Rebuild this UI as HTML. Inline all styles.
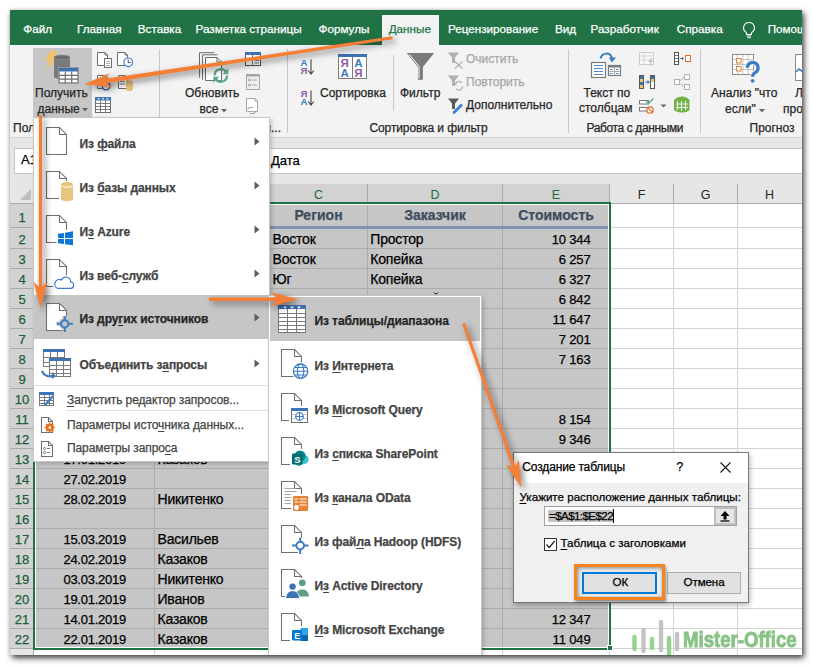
<!DOCTYPE html>
<html><head><meta charset="utf-8">
<style>
*{margin:0;padding:0;box-sizing:border-box}
html,body{width:813px;height:666px;overflow:hidden;background:#fff}
body{position:relative;font-family:"Liberation Sans",sans-serif;font-size:12px;color:#262626}
.a{position:absolute;white-space:nowrap;-webkit-text-stroke:0.25px currentColor}
#win{position:absolute;left:10px;top:10px;width:792px;height:645px;overflow:hidden;background:#fff}
#shadow{position:absolute;left:10px;top:10px;width:792px;height:645px;background:#fff;
 box-shadow:2px 3px 6px rgba(0,0,0,.75),0 0 4px rgba(0,0,0,.12)}
#pg{position:absolute;left:-10px;top:-10px;width:813px;height:666px}
u{text-decoration:underline;text-decoration-thickness:1px;text-underline-offset:1.5px}
</style></head><body>
<div id="shadow"></div>
<div id="win"><div id="pg">

<div class="a" style="left:10px;top:10px;width:792px;height:35px;background:#217346;"></div>
<div class="a" style="left:382px;top:15px;width:57px;height:30px;background:#f3f3f3;"></div>
<div class="a" style="left:23.3px;top:22.31px;font-size:11.7px;line-height:13.07px;color:#fff;letter-spacing:0px">Файл</div>
<div class="a" style="left:77.1px;top:22.31px;font-size:11.7px;line-height:13.07px;color:#fff;letter-spacing:0px">Главная</div>
<div class="a" style="left:137.8px;top:22.31px;font-size:11.7px;line-height:13.07px;color:#fff;letter-spacing:0px">Вставка</div>
<div class="a" style="left:195.5px;top:22.31px;font-size:11.7px;line-height:13.07px;color:#fff;letter-spacing:0px">Разметка страницы</div>
<div class="a" style="left:318.5px;top:22.31px;font-size:11.7px;line-height:13.07px;color:#fff;letter-spacing:0px">Формулы</div>
<div class="a" style="left:388.7px;top:22.31px;font-size:11.7px;line-height:13.07px;color:#217346;letter-spacing:0px">Данные</div>
<div class="a" style="left:447.90000000000003px;top:22.31px;font-size:11.7px;line-height:13.07px;color:#fff;letter-spacing:0px">Рецензирование</div>
<div class="a" style="left:554.9px;top:22.31px;font-size:11.7px;line-height:13.07px;color:#fff;letter-spacing:0px">Вид</div>
<div class="a" style="left:590.5999999999999px;top:22.31px;font-size:11.7px;line-height:13.07px;color:#fff;letter-spacing:0px">Разработчик</div>
<div class="a" style="left:676.8px;top:22.31px;font-size:11.7px;line-height:13.07px;color:#fff;letter-spacing:0px">Справка</div>
<div class="a" style="left:767.6999999999999px;top:22.31px;font-size:11.7px;line-height:13.07px;color:#fff;letter-spacing:0px">Помощник</div>
<svg class="a" style="left:741px;top:21px;" width="16" height="18" viewBox="0 0 16 18"><path d="M8 1.5a5.3 5.3 0 0 0-3.2 9.6c.6.5.9 1.2.9 1.9v.5h4.6V13c0-.7.3-1.4.9-1.9A5.3 5.3 0 0 0 8 1.5z" fill="none" stroke="#fff" stroke-width="1.1"/><path d="M5.8 15h4.4M6.3 16.8h3.4" stroke="#fff" stroke-width="1.1"/></svg>
<div class="a" style="left:10px;top:45px;width:792px;height:92px;background:#f3f3f3;"></div>
<div class="a" style="left:10px;top:137px;width:792px;height:1px;background:#d4d4d4;"></div>
<div class="a" style="left:10px;top:138px;width:792px;height:46px;background:#e6e6e6;"></div>
<div class="a" style="left:14px;top:148px;width:788px;height:26px;background:#fff;border:1px solid #c6c6c6;border-right:none"></div>
<div class="a" style="left:21px;top:153.24px;font-size:13px;line-height:14.52px;color:#000">A1</div>
<div class="a" style="left:271px;top:153.74px;font-size:13px;line-height:14.52px;color:#000">Дата</div>
<div class="a" style="left:33px;top:48px;width:59px;height:70px;background:#c6c6c6;"></div>
<div class="a" style="left:35px;top:87.04px;font-size:12px;line-height:13.40px;color:#262626">Получить</div>
<div class="a" style="left:37.5px;top:102.54px;font-size:12px;line-height:13.40px;color:#262626">данные</div>
<svg class="a" style="left:82px;top:108px;" width="6" height="4" viewBox="0 0 6 4"><path d="M0 0h6L3 3.5z" fill="#666"/></svg>
<div class="a" style="left:159px;top:49px;width:1px;height:84px;background:#c8c8c8;"></div>
<div class="a" style="left:287px;top:49px;width:1px;height:84px;background:#c8c8c8;"></div>
<div class="a" style="left:393px;top:55px;width:1px;height:56px;background:#c8c8c8;"></div>
<div class="a" style="left:568px;top:49px;width:1px;height:84px;background:#c8c8c8;"></div>
<div class="a" style="left:700px;top:49px;width:1px;height:84px;background:#c8c8c8;"></div>
<div class="a" style="left:185px;top:86.74px;font-size:12px;line-height:13.40px;color:#262626">Обновить</div>
<div class="a" style="left:199.5px;top:103.04px;font-size:12px;line-height:13.40px;color:#262626">все</div>
<svg class="a" style="left:221px;top:109px;" width="6" height="4" viewBox="0 0 6 4"><path d="M0 0h6L3 3.5z" fill="#666"/></svg>
<div class="a" style="left:320px;top:86.84px;font-size:12px;line-height:13.40px;color:#262626">Сортировка</div>
<div class="a" style="left:400px;top:86.89px;font-size:12px;line-height:13.40px;color:#262626">Фильтр</div>
<div class="a" style="left:466px;top:53.04px;font-size:12px;line-height:13.40px;color:#a6a6a6">Очистить</div>
<div class="a" style="left:466px;top:76.34px;font-size:12px;line-height:13.40px;color:#a6a6a6">Повторить</div>
<div class="a" style="left:466px;top:99.04px;font-size:12px;line-height:13.40px;color:#262626">Дополнительно</div>
<div class="a" style="left:583.5px;top:86.54px;font-size:12px;line-height:13.40px;color:#262626">Текст по</div>
<div class="a" style="left:579px;top:102.04px;font-size:12px;line-height:13.40px;color:#262626">столбцам</div>
<div class="a" style="left:711px;top:86.84px;font-size:12px;line-height:13.40px;color:#262626">Анализ "что</div>
<div class="a" style="left:725px;top:102.64px;font-size:12px;line-height:13.40px;color:#262626">если"</div>
<svg class="a" style="left:759px;top:109px;" width="6" height="4" viewBox="0 0 6 4"><path d="M0 0h6L3 3.5z" fill="#666"/></svg>
<div class="a" style="left:795px;top:86.84px;font-size:12px;line-height:13.40px;color:#262626">Лист</div>
<div class="a" style="left:783px;top:102.64px;font-size:12px;line-height:13.40px;color:#262626">прогноза</div>
<div class="a" style="left:13px;top:122.14px;font-size:12px;line-height:13.40px;color:#262626">Получить и преобразовать данные</div>
<div class="a" style="right:532px;top:122.14px;font-size:12px;line-height:13.40px;color:#262626;font-weight:400;">Запросы и подключения...</div>
<div class="a" style="left:369.5px;top:122.14px;font-size:12px;line-height:13.40px;color:#262626;letter-spacing:-0.12px">Сортировка и фильтр</div>
<div class="a" style="left:586.5px;top:122.14px;font-size:12px;line-height:13.40px;color:#262626;letter-spacing:-0.38px">Работа с данными</div>
<div class="a" style="left:749.5px;top:122.14px;font-size:12px;line-height:13.40px;color:#262626">Прогноз</div>
<svg class="a" style="left:0px;top:0px;left:0;top:0" width="813" height="666" viewBox="0 0 813 666"><path d="M49.8 51H57.5L53.8 57.8L56.8 58.6L46 70.2L49.2 61.6L45.6 60.6Z" fill="#f2c46f"/><path d="M54 57.3V76.8C54 78.2 57.6 79 62 79S70 78.2 70 76.8V57.3Z" fill="#7a7a7a"/><ellipse cx="62" cy="57.3" rx="8" ry="2.4" fill="#6a6a6a" stroke="#9a9a9a" stroke-width=".6"/><rect x="58" y="67" width="21" height="17" fill="#d0d0d0"/><rect x="59" y="68" width="19" height="15" fill="#fff" stroke="#6e6e6e" stroke-width="1.2"/><rect x="59" y="68" width="19" height="3.5" fill="#3d72b5"/><path d="M65.3 71.5V83M71.7 71.5V83M59 75.3H78M59 79.2H78" stroke="#6e6e6e" stroke-width="1.2"/><path d="M97.5 52.5H105L107.5 55V65.5H97.5Z" fill="#fff" stroke="#6e6e6e" stroke-width="1"/><path d="M105 52.5V55H107.5" fill="none" stroke="#6e6e6e" stroke-width="1"/><rect x="104.5" y="58.5" width="7" height="9" fill="#fff" stroke="#6e6e6e"/><path d="M106 61.5h4M106 63.5h4M106 65.5h4" stroke="#8a8a8a" stroke-width=".7"/><path d="M117.5 52.5H125L127.5 55V65.5H117.5Z" fill="#fff" stroke="#6e6e6e" stroke-width="1"/><path d="M125 52.5V55H127.5" fill="none" stroke="#6e6e6e" stroke-width="1"/><circle cx="128.2" cy="62.3" r="4.3" fill="#fff" stroke="#3a7bd5" stroke-width="1.2"/><path d="M128.2 59.5V62.6H130.6" stroke="#444" stroke-width="1" fill="none"/><path d="M97.5 75.5H105L107.5 78V88.5H97.5Z" fill="#fff" stroke="#6e6e6e" stroke-width="1"/><path d="M105 75.5V78H107.5" fill="none" stroke="#6e6e6e" stroke-width="1"/><circle cx="106" cy="86" r="3.8" fill="#fff" stroke="#3a5aa5" stroke-width="1.3"/><path d="M118.5 75.5H125L127.5 78V88.5H118.5Z" fill="#fff" stroke="#6e6e6e" stroke-width="1"/><path d="M125 75.5V78H127.5" fill="none" stroke="#6e6e6e" stroke-width="1"/><path d="M120 79h5M120 81.5h5M120 84h5" stroke="#6e6e6e" stroke-width=".8"/><path d="M126 81.8c0-1 1.8-1.6 3.5-1.6s3.5.6 3.5 1.6V89.5c0 1-1.8 1.5-3.5 1.5s-3.5-.5-3.5-1.5z" fill="#e8c27a"/><rect x="95.5" y="97.5" width="15" height="15" fill="#fff" stroke="#6e6e6e"/><rect x="95" y="97" width="16" height="3.5" fill="#3d72b5"/><path d="M97.5 98.8h2M102 98.8h2M106.5 98.8h2" stroke="#fff"/><path d="M100.5 100.5V112.5M105.5 100.5V112.5M95.5 103.5H110.5M95.5 106.5H110.5M95.5 109.5H110.5" stroke="#6e6e6e" stroke-width=".9"/><path d="M199.5 77.7V52.7H214.5" fill="none" stroke="#6e6e6e" stroke-width="1"/><path d="M202.5 79.8V54.8H217.5" fill="none" stroke="#6e6e6e" stroke-width="1"/><path d="M205.5 57.5H217L221.5 62V80.5H205.5Z" fill="#fff" stroke="#6e6e6e" stroke-width="1"/><path d="M217 57.5V62H221.5" fill="none" stroke="#6e6e6e" stroke-width="1"/><path d="M214.6 75.5a6.2 6.2 0 0 1 11.3-3.6" fill="none" stroke="#5ba88a" stroke-width="2.3"/><path d="M228.3 68.3v6h-6z" fill="#5ba88a"/><path d="M227 75.5a6.2 6.2 0 0 1-11.3 3.6" fill="none" stroke="#5ba88a" stroke-width="2.3"/><path d="M213.3 82.7v-6h6z" fill="#5ba88a"/><rect x="245.5" y="52.5" width="15" height="13" fill="#fff" stroke="#555"/><rect x="245" y="52" width="16" height="3" fill="#3d72b5"/><path d="M252.5 55V65.5M254.5 58h4.5M254.5 60.5h4.5M254.5 63h4.5" stroke="#777" stroke-width=".9"/><rect x="246.5" y="74.5" width="13" height="15" fill="#f3eef3" stroke="#a6a6a6"/><rect x="246" y="74" width="14" height="2.5" fill="#a6a6a6"/><circle cx="249.5" cy="80" r="1.1" fill="none" stroke="#a6a6a6"/><circle cx="249.5" cy="85" r="1.1" fill="none" stroke="#a6a6a6"/><path d="M252 80h5M252 85h5" stroke="#a6a6a6"/><path d="M246.5 98.5H255L257.5 101V111.5H246.5Z" fill="#fff" stroke="#a6a6a6" stroke-width="1"/><path d="M255 98.5V101H257.5" fill="none" stroke="#a6a6a6" stroke-width="1"/><path d="M248 109.5a2 2 0 0 1 2-2h3M255 111.5a2 2 0 0 1-2 2h-3M250 111.5h5" stroke="#a6a6a6" stroke-width="1.1" fill="none"/><text x="300.5" y="66.3" font-family="Liberation Sans" font-weight="bold" font-size="9.6" fill="#3d7cc0">А</text><text x="300.5" y="74.3" font-family="Liberation Sans" font-weight="bold" font-size="9.6" fill="#8a5aa8">Я</text><path d="M311 59.5V73.5M308.2 70.5L311 74L313.8 70.5" stroke="#444" stroke-width="1.1" fill="none"/><text x="300.5" y="97.3" font-family="Liberation Sans" font-weight="bold" font-size="9.6" fill="#8a5aa8">Я</text><text x="300.5" y="105.3" font-family="Liberation Sans" font-weight="bold" font-size="9.6" fill="#3d7cc0">А</text><path d="M311 90.5V104.5M308.2 101.5L311 105L313.8 101.5" stroke="#444" stroke-width="1.1" fill="none"/><rect x="338.5" y="54.5" width="28" height="24" fill="#fff" stroke="#7a7a7a"/><rect x="338" y="54" width="29" height="3" fill="#3d72b5"/><path d="M352.5 57V78.5" stroke="#7a7a7a"/><g font-family="Liberation Sans" font-weight="bold" font-size="11.5"><text x="340.5" y="67.3" fill="#8a5aa8">Я</text><text x="340.5" y="77.3" fill="#3d7cc0">А</text><text x="354.3" y="67.3" fill="#3d7cc0">А</text><text x="354.3" y="77.3" fill="#8a5aa8">Я</text></g><path d="M406.8 53H434.2L422.9 66.9V79.8H417.9V66.9Z" fill="#7a7a7a"/><path d="M409.5 54.5L419 66.5V78.5" stroke="#fff" stroke-width="1" fill="none"/><path d="M448 52.5H459L455 57.5V63H452V57.5Z" fill="#b0b0b0"/><path d="M455 61.5L462.5 68.5M462.5 61.5L455 68.5" stroke="#b0b0b0" stroke-width="1.2"/><path d="M448 75.5H459L455 80.5V86H452V80.5Z" fill="#b0b0b0"/><path d="M455.5 85a3.6 3.6 0 0 1 6.4-2.2M462.5 86.5a3.6 3.6 0 0 1-6.4 2.2" stroke="#b0b0b0" stroke-width="1.3" fill="none"/><path d="M448 98.5H459L455 103.5V109H452V103.5Z" fill="#5a5a5a"/><path d="M453.5 113L462 104.5" stroke="#3a7bd5" stroke-width="2.6"/><path d="M452.5 114.3l1.6-3 1.5 1.4z" fill="#3a7bd5"/><rect x="591.5" y="62.5" width="14" height="15" fill="#fff" stroke="#7a7a7a" stroke-width="1.2"/><path d="M594 65.5h9M594 68.5h9M594 71.5h9M594 74.5h9" stroke="#3d7cc0" stroke-width=".9"/><rect x="608.5" y="65.5" width="12" height="10" fill="#fff" stroke="#7a7a7a" stroke-width="1.2"/><rect x="608" y="65" width="13" height="2.5" fill="#7a7a7a"/><path d="M614.5 67.5V75.5M608.5 71.5H620.5" stroke="#9a9a9a" stroke-width=".8"/><path d="M610 69.5h2.5M616 69.5h2.5M610 73.5h2.5M616 73.5h2.5" stroke="#3d7cc0" stroke-width=".9"/><path d="M600.5 58.5C602 52.5 610.5 51.5 612 58.5" stroke="#3d7cc0" stroke-width="2" fill="none"/><path d="M608.8 57.5H616L612 62.5Z" fill="#3d7cc0"/><g opacity=".55"><rect x="639.5" y="52.5" width="14" height="12" fill="#fff" stroke="#aaa"/><path d="M639.5 56h14M639.5 60h14M644 52.5v12" stroke="#bbb"/><path d="M651 58l-3 4h2.5l-2 4.5 4.5-5.5h-2.5l2-3z" fill="#999"/></g><rect x="639.5" y="75.5" width="4" height="13" fill="#fff" stroke="#555"/><rect x="640" y="76" width="3" height="3" fill="#3d72b5"/><rect x="640" y="79" width="3" height="3" fill="#f0c36d"/><rect x="640" y="82" width="3" height="3" fill="#3d72b5"/><rect x="640" y="85" width="3" height="3" fill="#f0c36d"/><rect x="650.5" y="75.5" width="4" height="13" fill="#fff" stroke="#555"/><rect x="651" y="76" width="3" height="3" fill="#3d72b5"/><rect x="651" y="79" width="3" height="3" fill="#f0c36d"/><path d="M645 82h4M647.5 80.5l1.5 1.5-1.5 1.5" stroke="#3d7cc0" stroke-width="1.1" fill="none"/><rect x="639.5" y="100.5" width="9" height="3.5" fill="#fff" stroke="#777"/><rect x="639.5" y="107.5" width="9" height="3.5" fill="#fff" stroke="#777"/><path d="M646 101l2.5 2.5 5-5" stroke="#5ba88a" stroke-width="1.4" fill="none"/><circle cx="650" cy="110" r="3.2" fill="#fff" stroke="#e46a28" stroke-width="1.3"/><path d="M647.8 107.8l4.4 4.4" stroke="#e46a28" stroke-width="1.2"/><path d="M660.5 104.5h6l-3 3z" fill="#666"/><rect x="674.5" y="52.5" width="4" height="12" fill="#fff" stroke="#555"/><path d="M674.5 55.5h4M674.5 58.5h4M674.5 61.5h4" stroke="#555" stroke-width=".8"/><path d="M680 58.5h3.5M682 57l1.5 1.5-1.5 1.5" stroke="#3d7cc0" fill="none"/><rect x="685.5" y="55.5" width="5" height="6" fill="#fff" stroke="#e46a28"/><g stroke="#b0b0b0" fill="#fff"><rect x="674.5" y="79.5" width="5" height="5"/><rect x="684.5" y="74.5" width="5" height="5"/><rect x="684.5" y="84.5" width="5" height="5"/><path d="M679.5 81l5-4M679.5 83l5 4" fill="none"/></g><path d="M674 100c2-2.5 6-3.5 8-3.5s6 1 7.5 3.5V110c-1.5 2-5.5 2.5-7.5 2.5s-6-.5-8-2.5z" fill="#71b346"/><path d="M677.5 101v9M681.5 101v10M685.5 101v9M676 104h12M676 107.5h12" stroke="#fff" stroke-width=".9"/><rect x="732.5" y="54.5" width="21" height="20" fill="#fff" stroke="#8a8a8a"/><path d="M737.7 54.5v20M742.9 54.5v20M748.1 54.5v20M732.5 59.5h21M732.5 64.5h21M732.5 69.5h21" stroke="#b5b5b5" stroke-width=".8"/><rect x="736.5" y="58.5" width="4.5" height="4.5" fill="#fff" stroke="#e4823a"/><rect x="736.5" y="66.5" width="4.5" height="4.5" fill="#fff" stroke="#e4823a"/><path d="M747.3 67.8a5.4 5.4 0 1 1 8.2 4.6c-2.3 1.3-2.9 2.4-2.9 4.4" fill="none" stroke="#f3f3f3" stroke-width="5.5"/><path d="M747.3 67.8a5.4 5.4 0 1 1 8.2 4.6c-2.3 1.3-2.9 2.4-2.9 4.4" fill="none" stroke="#3d7cc0" stroke-width="3.3"/><circle cx="752.6" cy="80.8" r="1.9" fill="#3d7cc0"/><rect x="795.5" y="54.5" width="10" height="26" fill="#fff" stroke="#8a8a8a"/><path d="M796 72l3-3 4 3" stroke="#3d7cc0" stroke-width="1.6" fill="none"/></svg>
<div class="a" style="left:10px;top:184px;width:792px;height:19px;background:#e6e6e6;"></div>
<div class="a" style="left:34px;top:184px;width:576px;height:19px;background:#d2d2d2;"></div>
<div class="a" style="left:10px;top:203px;width:792px;height:1px;background:#ababab;"></div>
<svg class="a" style="left:19px;top:189px;" width="13" height="12" viewBox="0 0 13 12"><path d="M12 0V11H1z" fill="#bdbdbd"/></svg>
<div class="a" style="left:-6.0px;width:200px;text-align:center;top:188.69px;font-size:12.5px;line-height:13.96px;color:#1d6b3e;font-weight:400;-webkit-text-stroke:0">A</div>
<div class="a" style="left:154px;top:184px;width:1px;height:19px;background:#ababab;"></div>
<div class="a" style="left:112.0px;width:200px;text-align:center;top:188.69px;font-size:12.5px;line-height:13.96px;color:#1d6b3e;font-weight:400;-webkit-text-stroke:0">B</div>
<div class="a" style="left:269px;top:184px;width:1px;height:19px;background:#ababab;"></div>
<div class="a" style="left:218.5px;width:200px;text-align:center;top:188.69px;font-size:12.5px;line-height:13.96px;color:#1d6b3e;font-weight:400;-webkit-text-stroke:0">C</div>
<div class="a" style="left:367px;top:184px;width:1px;height:19px;background:#ababab;"></div>
<div class="a" style="left:335.0px;width:200px;text-align:center;top:188.69px;font-size:12.5px;line-height:13.96px;color:#1d6b3e;font-weight:400;-webkit-text-stroke:0">D</div>
<div class="a" style="left:502px;top:184px;width:1px;height:19px;background:#ababab;"></div>
<div class="a" style="left:456.0px;width:200px;text-align:center;top:188.69px;font-size:12.5px;line-height:13.96px;color:#1d6b3e;font-weight:400;-webkit-text-stroke:0">E</div>
<div class="a" style="left:609px;top:184px;width:1px;height:19px;background:#ababab;"></div>
<div class="a" style="left:541.5px;width:200px;text-align:center;top:188.69px;font-size:12.5px;line-height:13.96px;color:#262626;font-weight:400;-webkit-text-stroke:0">F</div>
<div class="a" style="left:673px;top:184px;width:1px;height:19px;background:#ababab;"></div>
<div class="a" style="left:605.5px;width:200px;text-align:center;top:188.69px;font-size:12.5px;line-height:13.96px;color:#262626;font-weight:400;-webkit-text-stroke:0">G</div>
<div class="a" style="left:737px;top:184px;width:1px;height:19px;background:#ababab;"></div>
<div class="a" style="left:669.5px;width:200px;text-align:center;top:188.69px;font-size:12.5px;line-height:13.96px;color:#262626;font-weight:400;-webkit-text-stroke:0">H</div>
<div class="a" style="left:33px;top:184px;width:1px;height:19px;background:#ababab;"></div>
<div class="a" style="left:10px;top:204px;width:23px;height:445px;background:#d2d2d2;"></div>
<div class="a" style="left:10px;top:649px;width:23px;height:10px;background:#e6e6e6;"></div>
<div class="a" style="left:33px;top:204px;width:1px;height:460px;background:#ababab;"></div>
<div class="a" style="left:10px;top:227px;width:23px;height:1px;background:#ababab;"></div>
<div class="a" style="left:10px;top:248px;width:23px;height:1px;background:#ababab;"></div>
<div class="a" style="left:10px;top:268px;width:23px;height:1px;background:#ababab;"></div>
<div class="a" style="left:10px;top:288px;width:23px;height:1px;background:#ababab;"></div>
<div class="a" style="left:10px;top:308px;width:23px;height:1px;background:#ababab;"></div>
<div class="a" style="left:10px;top:328px;width:23px;height:1px;background:#ababab;"></div>
<div class="a" style="left:10px;top:348px;width:23px;height:1px;background:#ababab;"></div>
<div class="a" style="left:10px;top:368px;width:23px;height:1px;background:#ababab;"></div>
<div class="a" style="left:10px;top:388px;width:23px;height:1px;background:#ababab;"></div>
<div class="a" style="left:10px;top:408px;width:23px;height:1px;background:#ababab;"></div>
<div class="a" style="left:10px;top:428px;width:23px;height:1px;background:#ababab;"></div>
<div class="a" style="left:10px;top:448px;width:23px;height:1px;background:#ababab;"></div>
<div class="a" style="left:10px;top:468px;width:23px;height:1px;background:#ababab;"></div>
<div class="a" style="left:10px;top:488px;width:23px;height:1px;background:#ababab;"></div>
<div class="a" style="left:10px;top:508px;width:23px;height:1px;background:#ababab;"></div>
<div class="a" style="left:10px;top:528px;width:23px;height:1px;background:#ababab;"></div>
<div class="a" style="left:10px;top:548px;width:23px;height:1px;background:#ababab;"></div>
<div class="a" style="left:10px;top:568px;width:23px;height:1px;background:#ababab;"></div>
<div class="a" style="left:10px;top:588px;width:23px;height:1px;background:#ababab;"></div>
<div class="a" style="left:10px;top:608px;width:23px;height:1px;background:#ababab;"></div>
<div class="a" style="left:10px;top:628px;width:23px;height:1px;background:#ababab;"></div>
<div class="a" style="left:10px;top:648px;width:23px;height:1px;background:#ababab;"></div>
<div class="a" style="left:10px;top:668px;width:23px;height:1px;background:#ababab;"></div>
<div class="a" style="left:-78px;width:200px;text-align:center;top:211.24px;font-size:13px;line-height:14.52px;color:#1a6038;font-weight:400;">1</div>
<div class="a" style="left:-78px;width:200px;text-align:center;top:233.04px;font-size:13px;line-height:14.52px;color:#1a6038;font-weight:400;">2</div>
<div class="a" style="left:-78px;width:200px;text-align:center;top:253.04px;font-size:13px;line-height:14.52px;color:#1a6038;font-weight:400;">3</div>
<div class="a" style="left:-78px;width:200px;text-align:center;top:273.04px;font-size:13px;line-height:14.52px;color:#1a6038;font-weight:400;">4</div>
<div class="a" style="left:-78px;width:200px;text-align:center;top:293.04px;font-size:13px;line-height:14.52px;color:#1a6038;font-weight:400;">5</div>
<div class="a" style="left:-78px;width:200px;text-align:center;top:313.04px;font-size:13px;line-height:14.52px;color:#1a6038;font-weight:400;">6</div>
<div class="a" style="left:-78px;width:200px;text-align:center;top:333.04px;font-size:13px;line-height:14.52px;color:#1a6038;font-weight:400;">7</div>
<div class="a" style="left:-78px;width:200px;text-align:center;top:353.04px;font-size:13px;line-height:14.52px;color:#1a6038;font-weight:400;">8</div>
<div class="a" style="left:-78px;width:200px;text-align:center;top:373.04px;font-size:13px;line-height:14.52px;color:#1a6038;font-weight:400;">9</div>
<div class="a" style="left:-78px;width:200px;text-align:center;top:393.04px;font-size:13px;line-height:14.52px;color:#1a6038;font-weight:400;">10</div>
<div class="a" style="left:-78px;width:200px;text-align:center;top:413.04px;font-size:13px;line-height:14.52px;color:#1a6038;font-weight:400;">11</div>
<div class="a" style="left:-78px;width:200px;text-align:center;top:433.04px;font-size:13px;line-height:14.52px;color:#1a6038;font-weight:400;">12</div>
<div class="a" style="left:-78px;width:200px;text-align:center;top:453.04px;font-size:13px;line-height:14.52px;color:#1a6038;font-weight:400;">13</div>
<div class="a" style="left:-78px;width:200px;text-align:center;top:473.04px;font-size:13px;line-height:14.52px;color:#1a6038;font-weight:400;">14</div>
<div class="a" style="left:-78px;width:200px;text-align:center;top:493.04px;font-size:13px;line-height:14.52px;color:#1a6038;font-weight:400;">15</div>
<div class="a" style="left:-78px;width:200px;text-align:center;top:513.03px;font-size:13px;line-height:14.52px;color:#1a6038;font-weight:400;">16</div>
<div class="a" style="left:-78px;width:200px;text-align:center;top:533.03px;font-size:13px;line-height:14.52px;color:#1a6038;font-weight:400;">17</div>
<div class="a" style="left:-78px;width:200px;text-align:center;top:553.03px;font-size:13px;line-height:14.52px;color:#1a6038;font-weight:400;">18</div>
<div class="a" style="left:-78px;width:200px;text-align:center;top:573.03px;font-size:13px;line-height:14.52px;color:#1a6038;font-weight:400;">19</div>
<div class="a" style="left:-78px;width:200px;text-align:center;top:593.03px;font-size:13px;line-height:14.52px;color:#1a6038;font-weight:400;">20</div>
<div class="a" style="left:-78px;width:200px;text-align:center;top:613.03px;font-size:13px;line-height:14.52px;color:#1a6038;font-weight:400;">21</div>
<div class="a" style="left:-78px;width:200px;text-align:center;top:633.03px;font-size:13px;line-height:14.52px;color:#1a6038;font-weight:400;">22</div>
<div class="a" style="left:34px;top:204px;width:576px;height:445px;background:#c6c6c6;"></div>
<div class="a" style="left:610px;top:204px;width:192px;height:460px;background:#fff;"></div>
<div class="a" style="left:34px;top:649px;width:576px;height:10px;background:#fff;"></div>
<div class="a" style="left:34px;top:227px;width:576px;height:1px;background:#ababab;"></div>
<div class="a" style="left:610px;top:227px;width:192px;height:1px;background:#d4d4d4;"></div>
<div class="a" style="left:34px;top:248px;width:576px;height:1px;background:#ababab;"></div>
<div class="a" style="left:610px;top:248px;width:192px;height:1px;background:#d4d4d4;"></div>
<div class="a" style="left:34px;top:268px;width:576px;height:1px;background:#ababab;"></div>
<div class="a" style="left:610px;top:268px;width:192px;height:1px;background:#d4d4d4;"></div>
<div class="a" style="left:34px;top:288px;width:576px;height:1px;background:#ababab;"></div>
<div class="a" style="left:610px;top:288px;width:192px;height:1px;background:#d4d4d4;"></div>
<div class="a" style="left:34px;top:308px;width:576px;height:1px;background:#ababab;"></div>
<div class="a" style="left:610px;top:308px;width:192px;height:1px;background:#d4d4d4;"></div>
<div class="a" style="left:34px;top:328px;width:576px;height:1px;background:#ababab;"></div>
<div class="a" style="left:610px;top:328px;width:192px;height:1px;background:#d4d4d4;"></div>
<div class="a" style="left:34px;top:348px;width:576px;height:1px;background:#ababab;"></div>
<div class="a" style="left:610px;top:348px;width:192px;height:1px;background:#d4d4d4;"></div>
<div class="a" style="left:34px;top:368px;width:576px;height:1px;background:#ababab;"></div>
<div class="a" style="left:610px;top:368px;width:192px;height:1px;background:#d4d4d4;"></div>
<div class="a" style="left:34px;top:388px;width:576px;height:1px;background:#ababab;"></div>
<div class="a" style="left:610px;top:388px;width:192px;height:1px;background:#d4d4d4;"></div>
<div class="a" style="left:34px;top:408px;width:576px;height:1px;background:#ababab;"></div>
<div class="a" style="left:610px;top:408px;width:192px;height:1px;background:#d4d4d4;"></div>
<div class="a" style="left:34px;top:428px;width:576px;height:1px;background:#ababab;"></div>
<div class="a" style="left:610px;top:428px;width:192px;height:1px;background:#d4d4d4;"></div>
<div class="a" style="left:34px;top:448px;width:576px;height:1px;background:#ababab;"></div>
<div class="a" style="left:610px;top:448px;width:192px;height:1px;background:#d4d4d4;"></div>
<div class="a" style="left:34px;top:468px;width:576px;height:1px;background:#ababab;"></div>
<div class="a" style="left:610px;top:468px;width:192px;height:1px;background:#d4d4d4;"></div>
<div class="a" style="left:34px;top:488px;width:576px;height:1px;background:#ababab;"></div>
<div class="a" style="left:610px;top:488px;width:192px;height:1px;background:#d4d4d4;"></div>
<div class="a" style="left:34px;top:508px;width:576px;height:1px;background:#ababab;"></div>
<div class="a" style="left:610px;top:508px;width:192px;height:1px;background:#d4d4d4;"></div>
<div class="a" style="left:34px;top:528px;width:576px;height:1px;background:#ababab;"></div>
<div class="a" style="left:610px;top:528px;width:192px;height:1px;background:#d4d4d4;"></div>
<div class="a" style="left:34px;top:548px;width:576px;height:1px;background:#ababab;"></div>
<div class="a" style="left:610px;top:548px;width:192px;height:1px;background:#d4d4d4;"></div>
<div class="a" style="left:34px;top:568px;width:576px;height:1px;background:#ababab;"></div>
<div class="a" style="left:610px;top:568px;width:192px;height:1px;background:#d4d4d4;"></div>
<div class="a" style="left:34px;top:588px;width:576px;height:1px;background:#ababab;"></div>
<div class="a" style="left:610px;top:588px;width:192px;height:1px;background:#d4d4d4;"></div>
<div class="a" style="left:34px;top:608px;width:576px;height:1px;background:#ababab;"></div>
<div class="a" style="left:610px;top:608px;width:192px;height:1px;background:#d4d4d4;"></div>
<div class="a" style="left:34px;top:628px;width:576px;height:1px;background:#ababab;"></div>
<div class="a" style="left:610px;top:628px;width:192px;height:1px;background:#d4d4d4;"></div>
<div class="a" style="left:34px;top:648px;width:576px;height:1px;background:#ababab;"></div>
<div class="a" style="left:610px;top:648px;width:192px;height:1px;background:#d4d4d4;"></div>
<div class="a" style="left:34px;top:668px;width:576px;height:1px;background:#ababab;"></div>
<div class="a" style="left:610px;top:668px;width:192px;height:1px;background:#d4d4d4;"></div>
<div class="a" style="left:154px;top:204px;width:1px;height:445px;background:#ababab;"></div>
<div class="a" style="left:154px;top:649px;width:1px;height:10px;background:#d4d4d4;"></div>
<div class="a" style="left:269px;top:204px;width:1px;height:445px;background:#ababab;"></div>
<div class="a" style="left:269px;top:649px;width:1px;height:10px;background:#d4d4d4;"></div>
<div class="a" style="left:367px;top:204px;width:1px;height:445px;background:#ababab;"></div>
<div class="a" style="left:367px;top:649px;width:1px;height:10px;background:#d4d4d4;"></div>
<div class="a" style="left:502px;top:204px;width:1px;height:445px;background:#ababab;"></div>
<div class="a" style="left:502px;top:649px;width:1px;height:10px;background:#d4d4d4;"></div>
<div class="a" style="left:609px;top:204px;width:1px;height:460px;background:#d4d4d4;"></div>
<div class="a" style="left:673px;top:204px;width:1px;height:460px;background:#d4d4d4;"></div>
<div class="a" style="left:737px;top:204px;width:1px;height:460px;background:#d4d4d4;"></div>
<div class="a" style="left:34px;top:226px;width:576px;height:3px;background:#8293b0;"></div>
<div class="a" style="left:218.5px;width:200px;text-align:center;top:208.33px;font-size:14px;line-height:15.64px;color:#3e4c60;font-weight:700;">Регион</div>
<div class="a" style="left:335.0px;width:200px;text-align:center;top:208.33px;font-size:14px;line-height:15.64px;color:#3e4c60;font-weight:700;">Заказчик</div>
<div class="a" style="left:456.0px;width:200px;text-align:center;top:208.33px;font-size:14px;line-height:15.64px;color:#3e4c60;font-weight:700;">Стоимость</div>
<div class="a" style="left:-6px;width:200px;text-align:center;top:208.33px;font-size:14px;line-height:15.64px;color:#44546a;font-weight:700;">Дата</div>
<div class="a" style="left:112px;width:200px;text-align:center;top:208.33px;font-size:14px;line-height:15.64px;color:#44546a;font-weight:700;">Менеджер</div>
<svg class="a" style="left:433px;top:292px;" width="6" height="3" viewBox="0 0 6 3"><path d="M0.8 0.5C1.5 2.3 4.5 2.3 5.2 0.5" stroke="#222" stroke-width="1" fill="none"/></svg>
<div class="a" style="left:272.5px;top:231.93px;font-size:14px;line-height:15.64px;color:#000;letter-spacing:-0.2px">Восток</div>
<div class="a" style="left:370.3px;top:231.93px;font-size:14px;line-height:15.64px;color:#000;letter-spacing:-0.2px">Простор</div>
<div class="a" style="left:272.5px;top:251.93px;font-size:14px;line-height:15.64px;color:#000;letter-spacing:-0.2px">Восток</div>
<div class="a" style="left:370.3px;top:251.93px;font-size:14px;line-height:15.64px;color:#000;letter-spacing:-0.2px">Копейка</div>
<div class="a" style="left:272.5px;top:271.93px;font-size:14px;line-height:15.64px;color:#000;letter-spacing:-0.2px">Юг</div>
<div class="a" style="left:370.3px;top:271.93px;font-size:14px;line-height:15.64px;color:#000;letter-spacing:-0.2px">Копейка</div>
<div class="a" style="right:222.5px;top:232.83px;font-size:13px;line-height:14.52px;color:#000;font-weight:400;letter-spacing:-0.15px">10 344</div>
<div class="a" style="right:222.5px;top:252.84px;font-size:13px;line-height:14.52px;color:#000;font-weight:400;letter-spacing:-0.15px">6 257</div>
<div class="a" style="right:222.5px;top:272.84px;font-size:13px;line-height:14.52px;color:#000;font-weight:400;letter-spacing:-0.15px">6 327</div>
<div class="a" style="right:222.5px;top:292.84px;font-size:13px;line-height:14.52px;color:#000;font-weight:400;letter-spacing:-0.15px">6 842</div>
<div class="a" style="right:222.5px;top:312.84px;font-size:13px;line-height:14.52px;color:#000;font-weight:400;letter-spacing:-0.15px">11 647</div>
<div class="a" style="right:222.5px;top:332.84px;font-size:13px;line-height:14.52px;color:#000;font-weight:400;letter-spacing:-0.15px">7 201</div>
<div class="a" style="right:222.5px;top:352.84px;font-size:13px;line-height:14.52px;color:#000;font-weight:400;letter-spacing:-0.15px">7 163</div>
<div class="a" style="right:222.5px;top:412.84px;font-size:13px;line-height:14.52px;color:#000;font-weight:400;letter-spacing:-0.15px">8 154</div>
<div class="a" style="right:222.5px;top:432.84px;font-size:13px;line-height:14.52px;color:#000;font-weight:400;letter-spacing:-0.15px">9 346</div>
<div class="a" style="right:222.5px;top:612.84px;font-size:13px;line-height:14.52px;color:#000;font-weight:400;letter-spacing:-0.15px">12 347</div>
<div class="a" style="right:222.5px;top:632.84px;font-size:13px;line-height:14.52px;color:#000;font-weight:400;letter-spacing:-0.15px">11 049</div>
<div class="a" style="left:-5.299999999999997px;width:200px;text-align:center;top:452.84px;font-size:13px;line-height:14.52px;color:#000;font-weight:400;letter-spacing:-0.25px">17.01.2019</div>
<div class="a" style="left:157.5px;top:451.93px;font-size:14px;line-height:15.64px;color:#000;letter-spacing:-0.2px">Казаков</div>
<div class="a" style="left:-5.299999999999997px;width:200px;text-align:center;top:472.84px;font-size:13px;line-height:14.52px;color:#000;font-weight:400;letter-spacing:-0.25px">27.02.2019</div>
<div class="a" style="left:-5.299999999999997px;width:200px;text-align:center;top:492.84px;font-size:13px;line-height:14.52px;color:#000;font-weight:400;letter-spacing:-0.25px">28.02.2019</div>
<div class="a" style="left:157.5px;top:491.93px;font-size:14px;line-height:15.64px;color:#000;letter-spacing:-0.2px">Никитенко</div>
<div class="a" style="left:-5.299999999999997px;width:200px;text-align:center;top:532.84px;font-size:13px;line-height:14.52px;color:#000;font-weight:400;letter-spacing:-0.25px">15.03.2019</div>
<div class="a" style="left:157.5px;top:531.93px;font-size:14px;line-height:15.64px;color:#000;letter-spacing:-0.2px">Васильев</div>
<div class="a" style="left:-5.299999999999997px;width:200px;text-align:center;top:552.84px;font-size:13px;line-height:14.52px;color:#000;font-weight:400;letter-spacing:-0.25px">24.02.2019</div>
<div class="a" style="left:157.5px;top:551.93px;font-size:14px;line-height:15.64px;color:#000;letter-spacing:-0.2px">Казаков</div>
<div class="a" style="left:-5.299999999999997px;width:200px;text-align:center;top:572.84px;font-size:13px;line-height:14.52px;color:#000;font-weight:400;letter-spacing:-0.25px">03.03.2019</div>
<div class="a" style="left:157.5px;top:571.93px;font-size:14px;line-height:15.64px;color:#000;letter-spacing:-0.2px">Никитенко</div>
<div class="a" style="left:-5.299999999999997px;width:200px;text-align:center;top:592.84px;font-size:13px;line-height:14.52px;color:#000;font-weight:400;letter-spacing:-0.25px">19.01.2019</div>
<div class="a" style="left:157.5px;top:591.93px;font-size:14px;line-height:15.64px;color:#000;letter-spacing:-0.2px">Иванов</div>
<div class="a" style="left:-5.299999999999997px;width:200px;text-align:center;top:612.84px;font-size:13px;line-height:14.52px;color:#000;font-weight:400;letter-spacing:-0.25px">14.01.2019</div>
<div class="a" style="left:157.5px;top:611.93px;font-size:14px;line-height:15.64px;color:#000;letter-spacing:-0.2px">Казаков</div>
<div class="a" style="left:-5.299999999999997px;width:200px;text-align:center;top:632.84px;font-size:13px;line-height:14.52px;color:#000;font-weight:400;letter-spacing:-0.25px">22.01.2019</div>
<div class="a" style="left:157.5px;top:631.93px;font-size:14px;line-height:15.64px;color:#000;letter-spacing:-0.2px">Казаков</div>
<div class="a" style="left:33px;top:202px;width:578px;height:2px;background:#217346;"></div>
<div class="a" style="left:33px;top:648px;width:578px;height:2px;background:#217346;"></div>
<div class="a" style="left:33px;top:202px;width:2px;height:448px;background:#217346;"></div>
<div class="a" style="left:609px;top:202px;width:2px;height:448px;background:#217346;"></div>
<div class="a" style="left:35px;top:204px;width:573px;height:1px;background:#fff;"></div>
<div class="a" style="left:35px;top:647px;width:573px;height:1px;background:#fff;"></div>
<div class="a" style="left:35px;top:204px;width:1px;height:443px;background:#fff;"></div>
<div class="a" style="left:608px;top:204px;width:1px;height:443px;background:#fff;"></div>
<div class="a" style="left:607px;top:645px;width:6px;height:6px;background:#217346;border:1px solid #fff"></div>
<div class="a" style="left:33px;top:117px;width:237px;height:345px;background:#fff;border:1px solid #c6c6c6;box-shadow:2px 2px 4px rgba(0,0,0,.18)"></div>
<div class="a" style="left:34px;top:295px;width:235px;height:44px;background:#c6c6c6;"></div>
<div class="a" style="left:79.5px;top:137.64px;font-size:12px;line-height:13.40px;color:#444;font-weight:700;letter-spacing:-0.1px">Из <u>ф</u>айла</div>
<svg class="a" style="left:254px;top:137px;" width="6" height="9" viewBox="0 0 6 9"><path d="M0.5 0.5L5.5 4.5L0.5 8.5z" fill="#5e5e5e"/></svg>
<div class="a" style="left:79.5px;top:181.64px;font-size:12px;line-height:13.40px;color:#444;font-weight:700;letter-spacing:-0.1px">Из <u>б</u>азы данных</div>
<svg class="a" style="left:254px;top:181px;" width="6" height="9" viewBox="0 0 6 9"><path d="M0.5 0.5L5.5 4.5L0.5 8.5z" fill="#5e5e5e"/></svg>
<div class="a" style="left:79.5px;top:225.64px;font-size:12px;line-height:13.40px;color:#444;font-weight:700;letter-spacing:-0.1px">И<u>з</u> Azure</div>
<svg class="a" style="left:254px;top:225px;" width="6" height="9" viewBox="0 0 6 9"><path d="M0.5 0.5L5.5 4.5L0.5 8.5z" fill="#5e5e5e"/></svg>
<div class="a" style="left:79.5px;top:269.64px;font-size:12px;line-height:13.40px;color:#444;font-weight:700;letter-spacing:-0.1px">Из веб-<u>с</u>лужб</div>
<svg class="a" style="left:254px;top:269px;" width="6" height="9" viewBox="0 0 6 9"><path d="M0.5 0.5L5.5 4.5L0.5 8.5z" fill="#5e5e5e"/></svg>
<div class="a" style="left:79.5px;top:313.34px;font-size:12px;line-height:13.40px;color:#262626;font-weight:700;letter-spacing:-0.1px">Из дру<u>г</u>их источников</div>
<svg class="a" style="left:254px;top:313px;" width="6" height="9" viewBox="0 0 6 9"><path d="M0.5 0.5L5.5 4.5L0.5 8.5z" fill="#5e5e5e"/></svg>
<div class="a" style="left:79.5px;top:359.44px;font-size:12px;line-height:13.40px;color:#444;font-weight:700;letter-spacing:-0.1px">Объединить з<u>а</u>просы</div>
<svg class="a" style="left:254px;top:359px;" width="6" height="9" viewBox="0 0 6 9"><path d="M0.5 0.5L5.5 4.5L0.5 8.5z" fill="#5e5e5e"/></svg>
<div class="a" style="left:34px;top:385px;width:235px;height:1px;background:#e1e1e1;"></div>
<div class="a" style="left:66px;top:410px;width:203px;height:1px;background:#e1e1e1;"></div>
<div class="a" style="left:67px;top:393.74px;font-size:12px;line-height:13.40px;color:#444;letter-spacing:-0.1px"><u>З</u>апустить редактор запросов...</div>
<div class="a" style="left:67px;top:418.94px;font-size:12px;line-height:13.40px;color:#444;letter-spacing:-0.05px">Параметры исто<u>ч</u>ника данных...</div>
<div class="a" style="left:67px;top:442.34px;font-size:12px;line-height:13.40px;color:#444;letter-spacing:-0.1px">Параметры запро<u>с</u>а</div>
<svg class="a" style="left:0px;top:0px;left:0;top:0" width="813" height="666" viewBox="0 0 813 666"><path d="M46.5 127.5H59.5L66.5 134.5V154.5H46.5Z" fill="#fff" stroke="#6e6e6e" stroke-width="1.05"/><path d="M59.5 127.5V134.5H66.5" fill="none" stroke="#6e6e6e" stroke-width="1.05"/><path d="M46.5 171.5H59.5L66.5 178.5V198.5H46.5Z" fill="#fff" stroke="#6e6e6e" stroke-width="1.05"/><path d="M59.5 171.5V178.5H66.5" fill="none" stroke="#6e6e6e" stroke-width="1.05"/><rect x="59" y="181" width="16" height="21" fill="#fff"/><path d="M61 184.5c0-1.5 2.6-2.5 6-2.5s6 1 6 2.5V199.5c0 .8-2.6 1.5-6 1.5s-6-.7-6-1.5z" fill="#e9c47c"/><path d="M61 185.5c1 1.2 3.5 1.6 6 1.6s5-.4 6-1.6" stroke="#fff" stroke-width="1" fill="none"/><path d="M46.5 215.5H59.5L66.5 222.5V242.5H46.5Z" fill="#fff" stroke="#6e6e6e" stroke-width="1.05"/><path d="M59.5 215.5V222.5H66.5" fill="none" stroke="#6e6e6e" stroke-width="1.05"/><rect x="56.5" y="230" width="18.5" height="17" fill="#fff"/><path d="M58 233.8L64 232.9V238H58ZM65 232.7L73 231.3V238H65ZM58 239H64V244.1L58 243.2ZM65 239H73V245.3L65 244.3Z" fill="#0a78d4"/><path d="M46.5 259.5H59.5L66.5 266.5V286.5H46.5Z" fill="#fff" stroke="#6e6e6e" stroke-width="1.05"/><path d="M59.5 259.5V266.5H66.5" fill="none" stroke="#6e6e6e" stroke-width="1.05"/><path d="M57.5 288.3h12.7a3.2 3.2 0 0 0 .5-6.4 4.9 4.9 0 0 0-9.3-2 3.4 3.4 0 0 0-3.9 8.4z" fill="#fff" stroke="#fff" stroke-width="4"/><path d="M57.5 288.3h12.7a3.2 3.2 0 0 0 .5-6.4 4.9 4.9 0 0 0-9.3-2 3.4 3.4 0 0 0-3.9 8.4z" fill="#fff" stroke="#3a7bd5" stroke-width="1.2"/><path d="M46.5 303.5H59.5L66.5 310.5V330.5H46.5Z" fill="#fff" stroke="#6e6e6e" stroke-width="1.05"/><path d="M59.5 303.5V310.5H66.5" fill="none" stroke="#6e6e6e" stroke-width="1.05"/><path d="M56.7 323.8h16.2M64.8 316v16" stroke="#c6c6c6" stroke-width="4.5"/><circle cx="64.8" cy="323.8" r="4" fill="none" stroke="#c6c6c6" stroke-width="4"/><circle cx="64.8" cy="323.8" r="3.6" fill="none" stroke="#3d7cc0" stroke-width="2"/><path d="M56.7 323.8h4.5M68.4 323.8h4.5M64.8 316v4.2M64.8 327.4V332" stroke="#3d7cc0" stroke-width="2"/><rect x="43.5" y="349.5" width="21" height="17" fill="#fff" stroke="#7a7a7a"/><rect x="43" y="349" width="22" height="3" fill="#3d72b5"/><path d="M50.5 352V367" stroke="#7a7a7a"/><path d="M57.5 352V367" stroke="#7a7a7a"/><path d="M43 357.5H65" stroke="#7a7a7a"/><path d="M43 362.5H65" stroke="#7a7a7a"/><rect x="49.5" y="358.5" width="21" height="18" fill="#fff" stroke="#7a7a7a"/><rect x="49" y="358" width="22" height="3" fill="#3d72b5"/><path d="M56.5 361V377" stroke="#7a7a7a"/><path d="M63.5 361V377" stroke="#7a7a7a"/><path d="M49 365.5H71" stroke="#7a7a7a"/><path d="M49 369.5H71" stroke="#7a7a7a"/><path d="M49 373.5H71" stroke="#7a7a7a"/><path d="M42 371c2 5 7 6 11 5" stroke="#3d7cc0" stroke-width="2.4" fill="none"/><path d="M52 372l4 4-4 3z" fill="#3d7cc0"/><rect x="39.5" y="392.5" width="14" height="13" fill="#fff" stroke="#7a7a7a"/><rect x="39" y="392" width="15" height="3" fill="#3d72b5"/><path d="M44.5 395V406" stroke="#7a7a7a"/><path d="M49.5 395V406" stroke="#7a7a7a"/><path d="M39 397.5H54" stroke="#7a7a7a"/><path d="M39 400.5H54" stroke="#7a7a7a"/><path d="M39 403.5H54" stroke="#7a7a7a"/><path d="M45 405l8-9" stroke="#3a7bd5" stroke-width="2.2"/><path d="M41.5 417.5H48.5L52.5 421.5V432.5H41.5Z" fill="#fff" stroke="#6e6e6e" stroke-width="1.05"/><path d="M48.5 417.5V421.5H52.5" fill="none" stroke="#6e6e6e" stroke-width="1.05"/><circle cx="49.8" cy="427.6" r="3" fill="none" stroke="#e8711d" stroke-width="2"/><path d="M49.8 422.6v10M44.8 427.6h10M46.3 424.1l7 7M53.3 424.1l-7 7" stroke="#e8711d" stroke-width="1.5"/><circle cx="49.8" cy="427.6" r="1.3" fill="#fff"/><path d="M41.5 441.5H48.5L52.5 445.5V456.5H41.5Z" fill="#fff" stroke="#6e6e6e" stroke-width="1.05"/><path d="M48.5 441.5V445.5H52.5" fill="none" stroke="#6e6e6e" stroke-width="1.05"/><circle cx="44.5" cy="448.5" r="1.1" fill="none" stroke="#777"/><circle cx="44.5" cy="452.5" r="1.1" fill="none" stroke="#777"/><path d="M47 448.5h3M47 452.5h3" stroke="#777"/></svg>
<div class="a" style="left:268px;top:295px;width:214px;height:370px;background:#fff;border:1px solid #c6c6c6;box-shadow:2px 2px 4px rgba(0,0,0,.18)"></div>
<div class="a" style="left:270px;top:297px;width:210px;height:44px;background:#c6c6c6;"></div>
<div class="a" style="left:314.5px;top:315.34px;font-size:12px;line-height:13.40px;color:#262626;font-weight:700;letter-spacing:-0.1px">Из таблицы/диапазона</div>
<div class="a" style="left:314.5px;top:359.94px;font-size:12px;line-height:13.40px;color:#444;font-weight:700;letter-spacing:-0.1px">Из <u>И</u>нтернета</div>
<div class="a" style="left:314.5px;top:403.94px;font-size:12px;line-height:13.40px;color:#444;font-weight:700;letter-spacing:-0.1px">Из <u>M</u>icrosoft Query</div>
<div class="a" style="left:314.5px;top:447.64px;font-size:12px;line-height:13.40px;color:#444;font-weight:700;letter-spacing:-0.1px">Из <u>с</u>писка SharePoint</div>
<div class="a" style="left:314.5px;top:491.84px;font-size:12px;line-height:13.40px;color:#444;font-weight:700;letter-spacing:-0.1px">Из <u>к</u>анала OData</div>
<div class="a" style="left:314.5px;top:536.14px;font-size:12px;line-height:13.40px;color:#444;font-weight:700;letter-spacing:-0.1px">Из фай<u>л</u>а Hadoop (HDFS)</div>
<div class="a" style="left:314.5px;top:579.54px;font-size:12px;line-height:13.40px;color:#444;font-weight:700;letter-spacing:-0.1px">И<u>з</u> Active Directory</div>
<div class="a" style="left:314.5px;top:623.74px;font-size:12px;line-height:13.40px;color:#444;font-weight:700;letter-spacing:-0.1px"><u>И</u>з Microsoft Exchange</div>
<svg class="a" style="left:0px;top:0px;left:0;top:0" width="813" height="666" viewBox="0 0 813 666"><rect x="278.5" y="305.5" width="27" height="27" fill="#fff" stroke="#7a7a7a"/><rect x="278" y="305" width="28" height="4" fill="#3d72b5"/><path d="M287.5 309V333" stroke="#7a7a7a"/><path d="M296.5 309V333" stroke="#7a7a7a"/><path d="M278 313.5H306" stroke="#7a7a7a"/><path d="M278 317.5H306" stroke="#7a7a7a"/><path d="M278 321.5H306" stroke="#7a7a7a"/><path d="M278 325.5H306" stroke="#7a7a7a"/><path d="M278 329.5H306" stroke="#7a7a7a"/><path d="M283 306.5h4l-2 2.2zM290 306.5h4l-2 2.2zM297 306.5h4l-2 2.2z" fill="#fff"/><path d="M281.5 349.5H294.5L301.5 356.5V376.5H281.5Z" fill="#fff" stroke="#6e6e6e" stroke-width="1.05"/><path d="M294.5 349.5V356.5H301.5" fill="none" stroke="#6e6e6e" stroke-width="1.05"/><path d="M281.5 393.5H294.5L301.5 400.5V420.5H281.5Z" fill="#fff" stroke="#6e6e6e" stroke-width="1.05"/><path d="M294.5 393.5V400.5H301.5" fill="none" stroke="#6e6e6e" stroke-width="1.05"/><path d="M281.5 437.5H294.5L301.5 444.5V464.5H281.5Z" fill="#fff" stroke="#6e6e6e" stroke-width="1.05"/><path d="M294.5 437.5V444.5H301.5" fill="none" stroke="#6e6e6e" stroke-width="1.05"/><path d="M281.5 481.5H294.5L301.5 488.5V508.5H281.5Z" fill="#fff" stroke="#6e6e6e" stroke-width="1.05"/><path d="M294.5 481.5V488.5H301.5" fill="none" stroke="#6e6e6e" stroke-width="1.05"/><path d="M281.5 525.5H294.5L301.5 532.5V552.5H281.5Z" fill="#fff" stroke="#6e6e6e" stroke-width="1.05"/><path d="M294.5 525.5V532.5H301.5" fill="none" stroke="#6e6e6e" stroke-width="1.05"/><path d="M281.5 569.5H294.5L301.5 576.5V596.5H281.5Z" fill="#fff" stroke="#6e6e6e" stroke-width="1.05"/><path d="M294.5 569.5V576.5H301.5" fill="none" stroke="#6e6e6e" stroke-width="1.05"/><path d="M281.5 613.5H294.5L301.5 620.5V640.5H281.5Z" fill="#fff" stroke="#6e6e6e" stroke-width="1.05"/><path d="M294.5 613.5V620.5H301.5" fill="none" stroke="#6e6e6e" stroke-width="1.05"/><circle cx="300.6" cy="371.2" r="9" fill="#fff"/><circle cx="300.6" cy="371.2" r="7.2" fill="#fff" stroke="#3d7cc0" stroke-width="1.3"/><ellipse cx="300.6" cy="371.2" rx="3.2" ry="7.2" fill="none" stroke="#3d7cc0" stroke-width="1.1"/><path d="M293.4 371.2h14.4M294.5 367.5h12.2M294.5 375h12.2" stroke="#3d7cc0" stroke-width="1.1"/><rect x="289" y="406" width="21" height="18" fill="#fff"/><rect x="291.5" y="408.5" width="16" height="14" fill="#fff" stroke="#6e6e6e"/><rect x="291" y="408" width="17" height="3" fill="#3d72b5"/><path d="M292 414.5h15M292 418.5h15" stroke="#bbb" stroke-width=".8"/><circle cx="299.5" cy="416.5" r="3.8" fill="#fff" stroke="#3d7cc0" stroke-width="1.2"/><path d="M295.7 416.5h7.6M299.5 412.7v7.6" stroke="#3d7cc0" stroke-width="1"/><rect x="290" y="449" width="20" height="19" fill="#fff"/><circle cx="304" cy="459.5" r="4.6" fill="#37c6d0"/><circle cx="300" cy="456" r="5.6" fill="#038387"/><circle cx="299" cy="462" r="3.8" fill="#1a9ba1"/><rect x="292" y="453.5" width="10.5" height="11" rx="1" fill="#036c70"/><text x="294.3" y="462.5" font-size="9.5" font-weight="bold" fill="#fff" font-family="Liberation Sans">S</text><path d="M284.5 488.5h12M284.5 491.5h12M284.5 494.5h8M284.5 497.5h8M284.5 500.5h8M284.5 503.5h8" stroke="#9a9a9a" stroke-width=".9"/><rect x="291" y="494" width="19" height="19" fill="#fff"/><rect x="293" y="496" width="15.2" height="15" rx="1.3" fill="#e8823a"/><path d="M299.5 499h7M299.5 502h7M299.5 505h7M294.5 499h3.5M294.5 502h3.5" stroke="#fff" stroke-width="1"/><circle cx="296.5" cy="507.5" r="2.4" fill="#fff"/><path d="M292 545.6h16.5M300.2 537.5v16.5" stroke="#fff" stroke-width="4.5"/><circle cx="300.2" cy="545.6" r="4" fill="none" stroke="#fff" stroke-width="4"/><circle cx="300.2" cy="545.6" r="3.8" fill="none" stroke="#3d7cc0" stroke-width="2"/><path d="M292 545.6h4.6M303.9 545.6h4.6M300.2 537.5v4.5M300.2 549.3v4.7" stroke="#3d7cc0" stroke-width="2"/><rect x="285" y="578" width="25" height="22" fill="#fff"/><circle cx="302.3" cy="582.8" r="3.4" fill="#5e9e86"/><path d="M295.5 596.5c0-4.5 3-7 6.8-7s6.6 2.5 6.6 7z" fill="#5e9e86"/><circle cx="292.6" cy="586.6" r="3.6" fill="#fff"/><circle cx="292.6" cy="586.6" r="3.2" fill="#3d72b5"/><path d="M285.8 598.5c0-5 3-7.8 6.8-7.8s6.8 2.8 6.8 7.8z" fill="#3d72b5" stroke="#fff" stroke-width=".8"/><rect x="290" y="626" width="20" height="17" fill="#fff"/><rect x="300.5" y="628" width="7.5" height="6.5" fill="#28a8ea"/><rect x="300.5" y="634.5" width="7.5" height="6.5" fill="#0a64ad"/><rect x="292" y="630" width="10" height="10.5" rx="1.2" fill="#0078d4"/><text x="294.2" y="638.6" font-size="9" font-weight="bold" fill="#fff" font-family="Liberation Sans">E</text></svg>
<div class="a" style="left:513px;top:452px;width:236px;height:151px;background:#f0f0f0;border:1px solid #7a7a7a;box-shadow:1px 2px 5px rgba(0,0,0,.3)"></div>
<div class="a" style="left:514px;top:453px;width:234px;height:30px;background:#fff;"></div>
<div class="a" style="left:522.3px;top:461.04px;font-size:12px;line-height:13.40px;color:#000;letter-spacing:-0.15px">Создание таблицы</div>
<div class="a" style="left:676.5px;top:461.14px;font-size:12px;line-height:13.40px;color:#000">?</div>
<svg class="a" style="left:720px;top:462px;" width="11" height="11" viewBox="0 0 11 11"><path d="M0.5 0.5L10.5 10.5M10.5 0.5L0.5 10.5" stroke="#111" stroke-width="1.1"/></svg>
<div class="a" style="left:519.5px;top:491.10px;font-size:11.6px;line-height:12.96px;color:#000;letter-spacing:0.0px"><u>У</u>кажите расположение данных таблицы:</div>
<div class="a" style="left:544px;top:506px;width:193px;height:20px;background:#fff;border:1px solid #a0a0a0"></div>
<div class="a" style="left:548px;top:510px;width:66px;height:12px;background:#c4c4c4;"></div>
<div class="a" style="left:549px;top:509.50px;font-size:11.6px;line-height:12.96px;color:#000;letter-spacing:-0.6px">=$A$1:$E$22</div>
<div class="a" style="left:613px;top:509px;width:1px;height:14px;background:#000;"></div>
<div class="a" style="left:714px;top:507px;width:22px;height:18px;background:#e5e5e5;border:2px solid #c0c0c0"></div>
<svg class="a" style="left:719px;top:510px;" width="12" height="12" viewBox="0 0 12 12"><path d="M6 1L1.5 6H4.5V9.5H7.5V6H10.5z" fill="#000"/><path d="M1.5 11h9" stroke="#000" stroke-width="1.3"/></svg>
<div class="a" style="left:544px;top:538px;width:13px;height:13px;background:#fff;border:1px solid #333"></div>
<svg class="a" style="left:545px;top:539px;" width="11" height="11" viewBox="0 0 11 11"><path d="M1.5 5.5L4.3 8.5L9.7 2" fill="none" stroke="#222" stroke-width="1.2"/></svg>
<div class="a" style="left:560.5px;top:537.10px;font-size:11.6px;line-height:12.96px;color:#000;letter-spacing:0.0px"><u>Т</u>аблица с заголовками</div>
<div class="a" style="left:582px;top:572px;width:75px;height:22px;background:#e1e1e1;border:2px solid #0078d7"></div>
<div class="a" style="left:612.5px;top:576.20px;font-size:11.6px;line-height:12.96px;color:#000">ОК</div>
<div class="a" style="left:667px;top:572px;width:74px;height:22px;background:#e1e1e1;border:1px solid #adadad"></div>
<div class="a" style="left:683.5px;top:576.20px;font-size:11.6px;line-height:12.96px;color:#000;letter-spacing:-0.1px">Отмена</div>
<div class="a" style="left:574px;top:564px;width:91px;height:36px;background:transparent;border:3.6px solid #f7841f;box-shadow:1px 2px 3px rgba(0,0,0,.45), inset 1px 1px 4px rgba(0,0,0,.45)"></div>
<svg class="a" style="left:0px;top:0px;left:0;top:0;opacity:.9" width="813" height="666" viewBox="0 0 813 666"><path d="M634.5 637V649" stroke="#8ccf84" stroke-width="4.4" stroke-linecap="round"/><path d="M643.5 630V651" stroke="#bdbdbd" stroke-width="4.4" stroke-linecap="round"/><path d="M652 639V648" stroke="#8ccf84" stroke-width="4.4" stroke-linecap="round"/><path d="M661 622V650" stroke="#bdbdbd" stroke-width="4.4" stroke-linecap="round"/><path d="M669 638V656" stroke="#8ccf84" stroke-width="4.4" stroke-linecap="round"/><path d="M677 634V649" stroke="#bdbdbd" stroke-width="4.4" stroke-linecap="round"/></svg>
<div class="a" style="left:683px;top:627.5px;font-size:22px;line-height:24px;font-weight:700;color:#7fbd7c;-webkit-text-stroke:0.9px #7fbd7c;opacity:.92;transform:scaleX(.845);transform-origin:0 0;letter-spacing:0px">Mister-Office</div>
<svg class="a" style="left:0;top:0;filter:drop-shadow(3px 3px 3px rgba(0,0,0,.5))" width="813" height="666"><path d="M392.3 36.2 L105.4 78.8 L109.7 73.3 L84.0 84.3 L111.7 87.2 L106.1 83.2 L392.7 39.2Z" fill="#f57e36"/><path d="M39.0 115.0 L38.8 286.7 L33.5 281.7 L40.5 307.7 L47.5 281.7 L42.2 286.7 L42.0 115.0Z" fill="#f57e36"/><path d="M209.0 300.9 L276.1 301.0 L271.1 306.2 L298.1 299.2 L271.1 292.2 L276.1 297.4 L209.0 297.5Z" fill="#f57e36"/><path d="M462.3 323.9 L512.3 467.3 L505.7 464.3 L521.2 487.5 L518.9 459.7 L515.5 466.2 L465.1 322.9Z" fill="#f57e36"/></svg>
<!--END-->
</div></div></body></html>
